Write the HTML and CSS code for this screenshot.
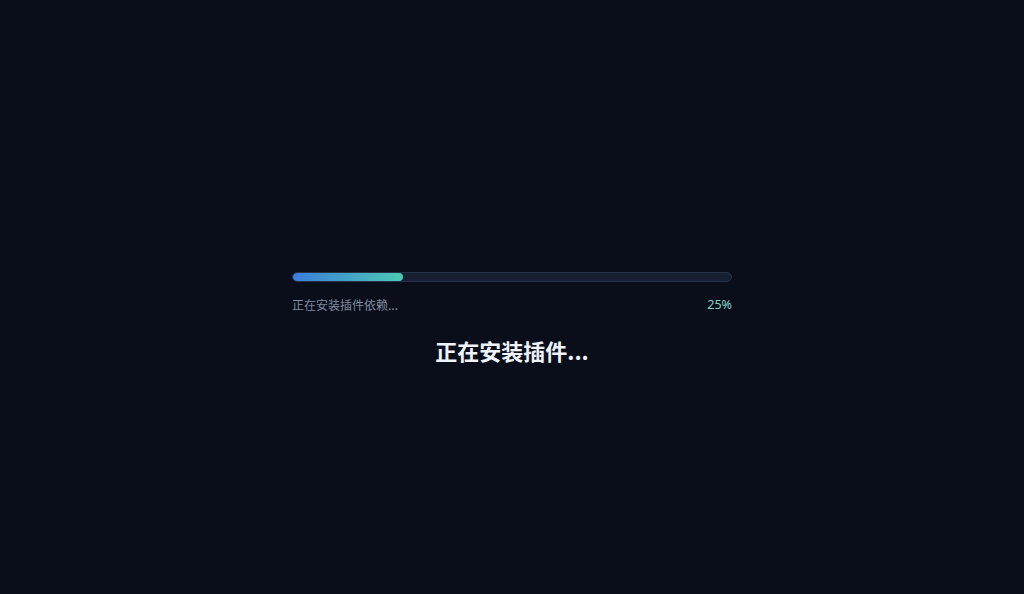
FILE: index.html
```html
<!DOCTYPE html>
<html lang="zh-CN">
<head>
<meta charset="utf-8">
<title>正在安装插件</title>
<link rel="stylesheet" href="styles.css">
</head>
<body>
<main class="screen">
  <section class="loader">
    <div class="track"><div class="fill" style="width:25%"></div></div>
    <div class="meta">
      <span class="step">正在安装插件依赖...</span>
      <span class="pct">25%</span>
    </div>
    <h1 class="title">正在安装插件...</h1>
  </section>
</main>
</body>
</html>
```
FILE: styles.css
```css
html, body {
  margin: 0;
  padding: 0;
  height: 100%;
  background: #0a0e1a;
}
body {
  font-family: "Noto Sans CJK SC", "Noto Sans", sans-serif;
}
.screen {
  height: 100%;
  display: flex;
  justify-content: center;
}
.loader {
  width: 440px;
  padding-top: 272px;
  display: flex;
  flex-direction: column;
}
.track {
  height: 8px;
  border-radius: 5px;
  background: #172033;
  border: 1px solid #26314a;
  overflow: hidden;
}
.fill {
  height: 100%;
  border-radius: 5px;
  background: linear-gradient(90deg, #3b7ddb, #4cc9b4);
}
.meta {
  display: flex;
  justify-content: space-between;
  margin-top: 14px;
  font-size: 12px;
  line-height: 18px;
}
.step {
  color: #7f8a9e;
}
.pct {
  color: #7fd4c6;
  font-family: "Noto Sans", sans-serif;
  font-size: 12.5px;
}
.title {
  margin: 20px 0 0;
  font-size: 22px;
  line-height: 32px;
  font-weight: 700;
  color: #eef2fb;
  text-align: center;
}
```
